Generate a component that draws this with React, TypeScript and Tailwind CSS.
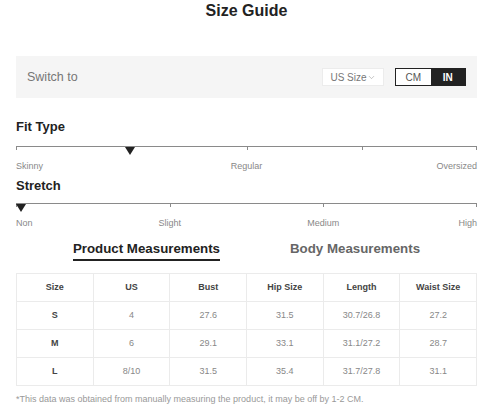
import { ChevronDown } from "lucide-react";

const fitTicks = [0, 50, 75, 100];
const stretchTicks = [0, 33.33, 66.66, 100];

const rows = [
  ["S", "4", "27.6", "31.5", "30.7/26.8", "27.2"],
  ["M", "6", "29.1", "33.1", "31.1/27.2", "28.7"],
  ["L", "8/10", "31.5", "35.4", "31.7/27.8", "31.1"],
];

const headers = ["Size", "US", "Bust", "Hip Size", "Length", "Waist Size"];

function Scale({
  ticks,
  marker,
  labels,
}: {
  ticks: number[];
  marker: number;
  labels: { text: string; pos: number }[];
}) {
  return (
    <div>
      <div className="relative h-[10px]">
        <div className="absolute left-0 right-0 top-0 h-px bg-[#8a8a8a]" />
        {ticks.map((t) => (
          <div
            key={t}
            className="absolute top-0 h-[4px] w-px bg-[#8a8a8a]"
            style={{ left: `calc(${t}% - ${t === 100 ? 1 : 0}px)` }}
          />
        ))}
        <div
          className="absolute top-[1px] h-0 w-0 -translate-x-1/2 border-x-[5px] border-t-[8px] border-x-transparent border-t-[#222]"
          style={{ left: `${marker}%` }}
        />
      </div>
      <div className="relative mt-[4px] h-[12px] text-[9px] leading-[12px] text-[#888]">
        {labels.map((l) => (
          <span
            key={l.text}
            className="absolute top-0 whitespace-nowrap"
            style={
              l.pos === 0
                ? { left: 0 }
                : l.pos === 100
                  ? { right: 0 }
                  : { left: `${l.pos}%`, transform: "translateX(-50%)" }
            }
          >
            {l.text}
          </span>
        ))}
      </div>
    </div>
  );
}

export default function App() {
  return (
    <div
      className="min-h-[413px] w-[500px] bg-white"
      style={{ fontFamily: '"Liberation Sans", Arial, sans-serif' }}
    >
      <div className="ml-4 w-[461px]">
        <h1 className="pt-[2px] text-center text-[16px] font-bold leading-[18px] text-[#222]">
          Size Guide
        </h1>

        <div className="mt-[36px] flex h-[42px] items-center justify-between bg-[#f5f5f5] pl-[11px] pr-[11px]">
          <span className="text-[12.5px] text-[#777]">Switch to</span>
          <div className="flex items-center">
            <div className="flex h-[18px] w-[62px] items-center justify-center border border-[#ececec] bg-white text-[10px] text-[#777]">
              US Size
              <ChevronDown className="h-[9px] w-[9px] text-[#999]" strokeWidth={1.5} />
            </div>
            <div className="ml-[11px] flex h-[18px] w-[71px] border border-[#222] text-[10px]">
              <span className="flex flex-1 items-center justify-center bg-white text-[#555]">
                CM
              </span>
              <span className="flex flex-1 items-center justify-center bg-[#222] font-bold text-white">
                IN
              </span>
            </div>
          </div>
        </div>

        <h2 className="mt-[21px] text-[13px] font-bold leading-[16px] text-[#222]">
          Fit Type
        </h2>
        <div className="mt-[11px]">
          <Scale
            ticks={fitTicks}
            marker={24.8}
            labels={[
              { text: "Skinny", pos: 0 },
              { text: "Regular", pos: 50 },
              { text: "Oversized", pos: 100 },
            ]}
          />
        </div>

        <h2 className="mt-[6px] text-[13px] font-bold leading-[16px] text-[#222]">
          Stretch
        </h2>
        <div className="mt-[9px]">
          <Scale
            ticks={stretchTicks}
            marker={1.1}
            labels={[
              { text: "Non", pos: 0 },
              { text: "Slight", pos: 33.33 },
              { text: "Medium", pos: 66.66 },
              { text: "High", pos: 100 },
            ]}
          />
        </div>

        <div className="mt-[11px] flex justify-center gap-[70px] text-[13.3px] font-bold leading-[18px]">
          <span className="border-b-[2px] border-[#222] pb-[1px] text-[#222]">
            Product Measurements
          </span>
          <span className="text-[#666]">Body Measurements</span>
        </div>

        <table className="mt-[12px] w-full table-fixed border-collapse text-center text-[9px]">
          <thead>
            <tr className="h-[28px]">
              {headers.map((h) => (
                <th
                  key={h}
                  className="border border-[#ebebeb] font-bold text-[#444]"
                >
                  {h}
                </th>
              ))}
            </tr>
          </thead>
          <tbody>
            {rows.map((r) => (
              <tr key={r[0]} className="h-[28px]">
                {r.map((c, i) => (
                  <td
                    key={i}
                    className={
                      i === 0
                        ? "border border-[#ebebeb] font-bold text-[#444]"
                        : "border border-[#ebebeb] text-[#888]"
                    }
                  >
                    {c}
                  </td>
                ))}
              </tr>
            ))}
          </tbody>
        </table>

        <p className="mt-[7px] text-[9px] text-[#999]">
          *This data was obtained from manually measuring the product, it may be off by 1-2 CM.
        </p>
      </div>
    </div>
  );
}
